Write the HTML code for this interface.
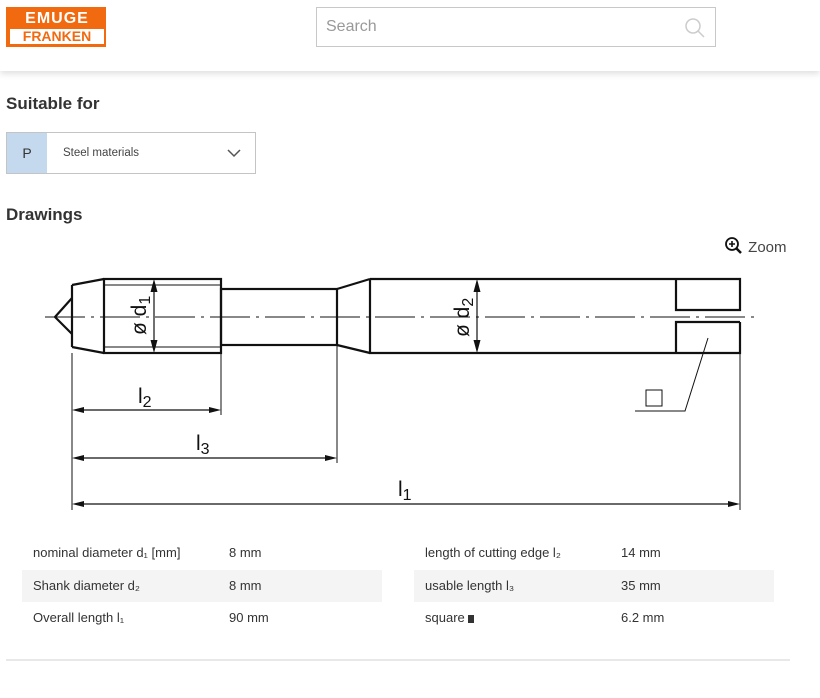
<!DOCTYPE html>
<html><head><meta charset="utf-8"><style>
*{margin:0;padding:0;box-sizing:border-box}
body{width:820px;height:698px;background:#fff;font-family:"Liberation Sans",sans-serif;color:#333;position:relative;overflow:hidden}
.hdr{position:absolute;left:0;top:0;width:820px;height:71px;background:#fff;box-shadow:0 3px 6px rgba(0,0,0,.12)}
.logo{position:absolute;left:6px;top:7px;width:100px;height:40px;background:#f26a10;border:1px solid #f26a10}
.logo .a{position:absolute;left:3px;top:3px;width:94px;height:15px;color:#fff;font-weight:bold;font-size:16px;line-height:15px;text-align:center;letter-spacing:1px}
.logo .b{position:absolute;left:3px;top:21px;width:94px;height:15px;background:#fff;color:#f26a10;font-weight:bold;font-size:14px;line-height:15px;text-align:center}
.search{position:absolute;left:316px;top:7px;width:400px;height:40px;border:1px solid #c8c8c8;font-size:16px;color:#999;padding:10px 9px}
h2{position:absolute;left:6px;font-size:17px;font-weight:bold;color:#333}
.sel{position:absolute;left:6px;top:132px;width:250px;height:42px;border:1px solid #c4c4c4}
.sel .p{position:absolute;left:0;top:0;width:40px;height:40px;background:#c4d9ee;font-size:14px;text-align:center;line-height:40px;color:#333}
.sel .t{position:absolute;left:56px;top:14px;font-size:11.5px;color:#444}
.row{position:absolute;height:32px;font-size:13px;line-height:32px;color:#333}
.row span{position:absolute}
</style></head><body>
<div class="hdr">
<div class="logo"><div class="a">EMUGE</div><div class="b">FRANKEN</div></div>
<div class="search">Search
<svg style="position:absolute;right:9px;top:9px" width="22" height="22" viewBox="0 0 22 22"><circle cx="9" cy="9" r="7" fill="none" stroke="#ccc" stroke-width="1.5"/><line x1="14" y1="14" x2="20" y2="20" stroke="#ccc" stroke-width="1.5"/></svg></div>
</div>
<h2 style="top:94px">Suitable for</h2>
<div class="sel"><div class="p">P</div><div class="t">Steel materials</div>
<svg style="position:absolute;left:220px;top:15px" width="14" height="10" viewBox="0 0 14 10"><path d="M1 2 L7 8 L13 2" fill="none" stroke="#555" stroke-width="1.5"/></svg></div>
<h2 style="top:205px">Drawings</h2>
<div style="position:absolute;left:724px;top:236px;font-size:15px;color:#444">
<svg width="20" height="20" viewBox="0 0 20 20" style="vertical-align:-4px"><circle cx="8" cy="8" r="6" fill="none" stroke="#111" stroke-width="1.8"/><line x1="12" y1="12" x2="17" y2="17" stroke="#111" stroke-width="2.5"/><path d="M8 5v6M5 8h6" stroke="#111" stroke-width="1.6"/></svg> Zoom</div>
<svg style="position:absolute;left:0;top:0" width="820" height="698" viewBox="0 0 820 698">
<g fill="none" stroke="#111">
<path d="M45 317H760" stroke-width="1" stroke-dasharray="40 6 3 6"/>
<g stroke-width="2.2">
<path d="M72 298L55 317L72 334"/>
<path d="M72 285V347M72 285L104 279M72 347L104 353"/>
<rect x="104" y="279" width="117" height="74"/>
<rect x="221" y="289" width="116" height="56"/>
<path d="M337 289L370 279M337 345L370 353"/>
<path d="M370 279H740V310H676V279M740 322H676V353M370 279V353H740V322"/>
</g>
<path d="M104 285H221M104 347H221" stroke-width="1"/>
<path d="M72 353V510M221 353V415M337 345V463M740 322V510" stroke-width="1"/>
<path d="M708 338L685 411H635" stroke-width="1"/>
<rect x="646" y="390" width="16" height="16" stroke-width="1"/>
<path d="M154 283V349M477 283V349M76 410H217M76 458H333M76 504H736" stroke-width="1.2"/>
</g>
<g fill="#111">
<path d="M154 279l-3.5 13h7zM154 353l-3.5-13h7zM477 279l-3.5 13h7zM477 353l-3.5-13h7z"/>
<path d="M72 410l12-3v6zM221 410l-12-3v6zM72 458l12-3v6zM337 458l-12-3v6zM72 504l12-3v6zM740 504l-12-3v6z"/>
</g>
<g font-family="Liberation Sans,sans-serif" fill="#111" font-size="21">
<text transform="translate(146 335) rotate(-90)">ø d<tspan font-size="16" dy="4">1</tspan></text>
<text transform="translate(469 337) rotate(-90)">ø d<tspan font-size="16" dy="4">2</tspan></text>
<text x="138" y="403">l<tspan font-size="16" dy="4">2</tspan></text>
<text x="196" y="450">l<tspan font-size="16" dy="4">3</tspan></text>
<text x="398" y="496">l<tspan font-size="16" dy="4">1</tspan></text>
</g>
</svg>
<div class="row" style="left:22px;top:537px;width:360px"><span style="left:11px">nominal diameter d₁ [mm]</span><span style="left:207px">8 mm</span></div>
<div class="row" style="left:22px;top:570px;width:360px;background:#f4f4f4"><span style="left:11px">Shank diameter d₂</span><span style="left:207px">8 mm</span></div>
<div class="row" style="left:22px;top:602px;width:360px"><span style="left:11px">Overall length l₁</span><span style="left:207px">90 mm</span></div>
<div class="row" style="left:414px;top:537px;width:360px"><span style="left:11px">length of cutting edge l₂</span><span style="left:207px">14 mm</span></div>
<div class="row" style="left:414px;top:570px;width:360px;background:#f4f4f4"><span style="left:11px">usable length l₃</span><span style="left:207px">35 mm</span></div>
<div class="row" style="left:414px;top:602px;width:360px"><span style="left:11px">square <span style="position:static;display:inline-block;width:6px;height:8px;background:#333;vertical-align:-1px"></span></span><span style="left:207px">6.2 mm</span></div>
<div style="position:absolute;left:6px;top:659px;width:784px;height:2px;background:#e8e8e8"></div>
</body></html>
